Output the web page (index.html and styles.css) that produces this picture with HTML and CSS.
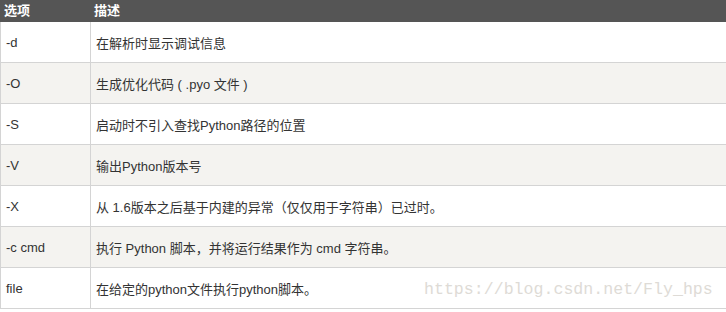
FILE: index.html
```html
<!DOCTYPE html>
<html lang="zh-CN">
<head>
    <meta charset="UTF-8">
    <title>Python 命令行参数</title>
    <link rel="stylesheet" href="styles.css">
</head>
<body>
    <div class="wrap">
        <table class="opts">
            <thead>
                <tr>
                    <th class="col-opt">选项</th>
                    <th>描述</th>
                </tr>
            </thead>
            <tbody>
                <tr><td class="col-opt">-d</td><td>在解析时显示调试信息</td></tr>
                <tr><td class="col-opt">-O</td><td>生成优化代码 ( .pyo 文件 )</td></tr>
                <tr><td class="col-opt">-S</td><td>启动时不引入查找Python路径的位置</td></tr>
                <tr><td class="col-opt">-V</td><td>输出Python版本号</td></tr>
                <tr><td class="col-opt">-X</td><td>从 1.6版本之后基于内建的异常（仅仅用于字符串）已过时。</td></tr>
                <tr><td class="col-opt">-c cmd</td><td>执行 Python 脚本，并将运行结果作为 cmd 字符串。</td></tr>
                <tr><td class="col-opt">file</td><td>在给定的python文件执行python脚本。</td></tr>
            </tbody>
        </table>
        <div class="watermark">https://blog.csdn.net/Fly_hps</div>
    </div>
</body>
</html>
```

FILE: styles.css
```css
/* General */
body {
    margin: 0;
    background: #fff;
    font-family: "Liberation Sans", Arial, "Noto Sans CJK SC", sans-serif;
    font-size: 13px;
    color: #333;
}

.wrap {
    position: relative;
}

/* Options table */
.opts {
    width: 100%;
    border-collapse: separate;
    border-spacing: 0;
}

.opts th {
    background-color: #555;
    color: #fff;
    font-weight: bold;
    text-align: left;
    height: 22px;
    padding: 0 0 0 3px;
    line-height: 22px;
}

.opts th.col-opt {
    padding-left: 4px;
}

.opts td {
    height: 40px;
    padding: 0 0 0 5px;
    border-bottom: 1px solid #d4d4d4;
    vertical-align: middle;
}

.opts td.col-opt {
    border-left: 1px solid #d4d4d4;
    border-right: 1px solid #d4d4d4;
}

.col-opt {
    width: 91px;
    box-sizing: border-box;
}

.opts tbody tr:nth-child(even) td {
    background-color: #f4f3f0;
}

/* Blog watermark */
.watermark {
    position: absolute;
    left: 424px;
    top: 280px;
    font-family: "Liberation Mono", "Courier New", monospace;
    font-size: 16.6px;
    line-height: 20px;
    color: #dedbd6;
}
```
